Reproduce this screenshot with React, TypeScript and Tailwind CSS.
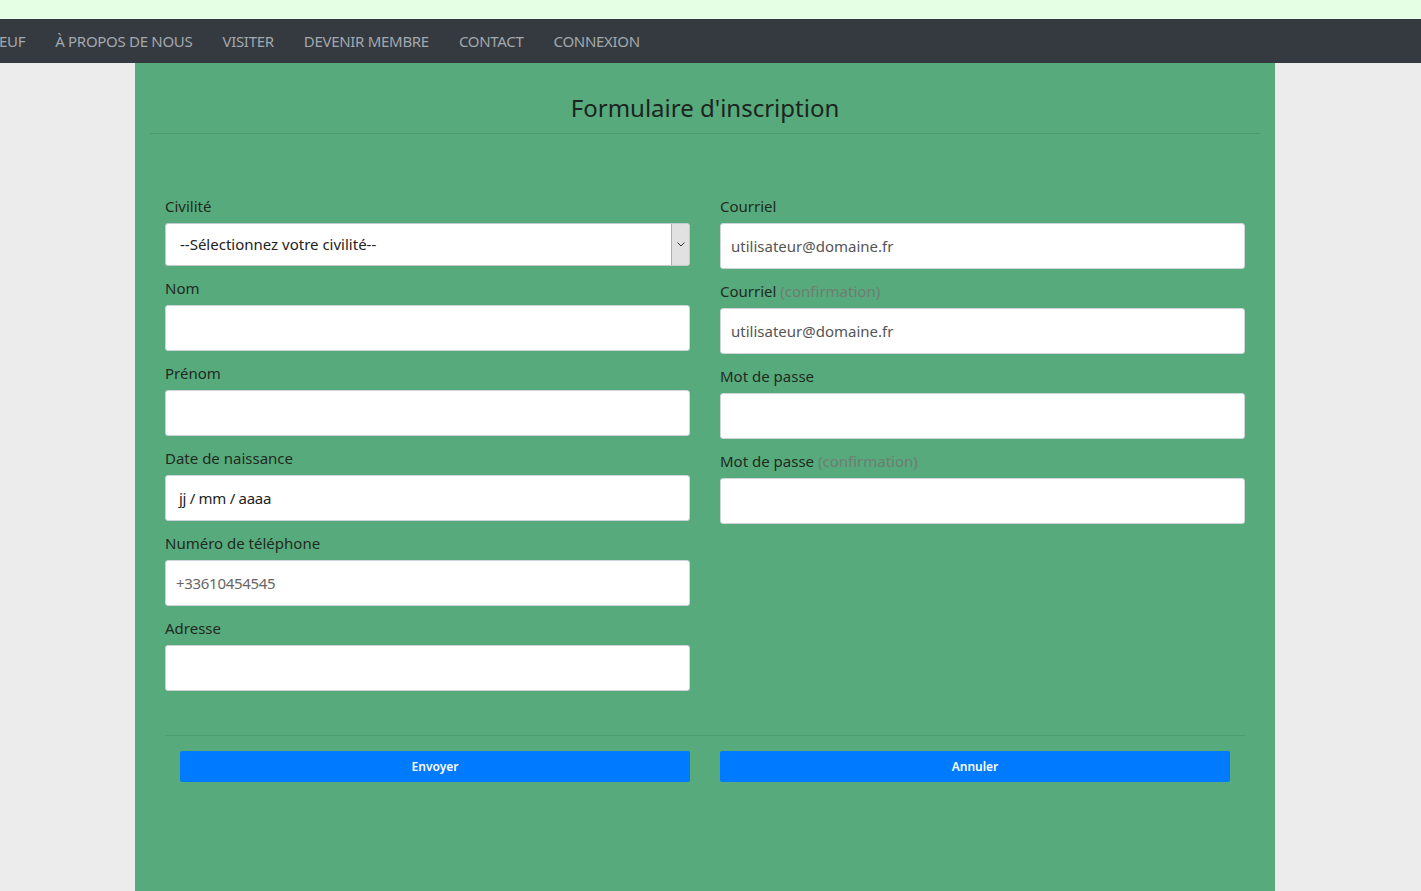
import React from "react";

const font = { fontFamily: '"Noto Sans", "Open Sans", sans-serif' };

function Label({ main, extra }: { main: string; extra?: string }) {
  return (
    <label className="block text-[15px] leading-[20px] text-[#1f2a22] mb-[7px]">
      {main}
      {extra && <span className="text-[#6f7d74]"> {extra}</span>}
    </label>
  );
}

function Input({ value, cls }: { value?: string; cls?: string }) {
  return (
    <div
      className={
        "h-[46px] w-full bg-white border border-[#ced4da] rounded-[3px] flex items-center text-[15px] " +
        (cls ?? "")
      }
    >
      {value}
    </div>
  );
}

export default function App() {
  const nav = ["À PROPOS DE NOUS", "VISITER", "DEVENIR MEMBRE", "CONTACT", "CONNEXION"];
  return (
    <div className="min-h-screen flex flex-col bg-[#ececec]" style={font}>
      <div className="h-[19px] bg-[#e5ffe5]" />
      <nav className="h-[44px] bg-[#343a40] flex items-center overflow-hidden text-[15px] text-[#a3a8ad] tracking-[-0.3px]">
        <span className="-ml-[1px] mr-[30px]">EUF</span>
        {nav.map((n) => (
          <span key={n} className="mr-[30px] whitespace-nowrap">
            {n}
          </span>
        ))}
      </nav>
      <div className="flex-1 flex pl-[135px]">
        <main className="w-[1140px] bg-[#57aa7b] px-[15px] pb-[110px]">
          <h1 className="text-center text-[24px] leading-[34px] text-[#1c241f] pt-[28px] pb-[8px]">
            Formulaire d'inscription
          </h1>
          <div className="border-t border-[#4a9a6c]" />
          <div className="px-[15px] pt-[62px]">
            <div className="grid grid-cols-2 gap-x-[30px]">
              <div className="flex flex-col gap-[12px]">
                <div>
                  <Label main="Civilité" />
                  <div className="h-[43px] bg-white border border-[#c4c9cd] rounded-[3px] flex items-center text-[15px] text-[#222] pl-[14px] relative">
                    --Sélectionnez votre civilité--
                    <div className="absolute right-0 top-0 bottom-0 w-[18px] bg-[#e1e1e1] border-l border-[#adadad] rounded-r-[3px] flex items-center justify-center">
                      <svg width="8" height="5" viewBox="0 0 8 5">
                        <path d="M0.5 0.5 L4 4 L7.5 0.5" fill="none" stroke="#333" strokeWidth="1" />
                      </svg>
                    </div>
                  </div>
                </div>
                <div>
                  <Label main="Nom" />
                  <Input />
                </div>
                <div>
                  <Label main="Prénom" />
                  <Input />
                </div>
                <div>
                  <Label main="Date de naissance" />
                  <Input value="jj / mm / aaaa" cls="pl-[13px] text-[#222] tracking-[-0.3px]" />
                </div>
                <div>
                  <Label main="Numéro de téléphone" />
                  <Input value="+33610454545" cls="pl-[10px] text-[#666] tracking-[-0.3px]" />
                </div>
                <div>
                  <Label main="Adresse" />
                  <Input />
                </div>
              </div>
              <div className="flex flex-col gap-[12px]">
                <div>
                  <Label main="Courriel" />
                  <Input value="utilisateur@domaine.fr" cls="pl-[10px] text-[#555]" />
                </div>
                <div>
                  <Label main="Courriel" extra="(confirmation)" />
                  <Input value="utilisateur@domaine.fr" cls="pl-[10px] text-[#555]" />
                </div>
                <div>
                  <Label main="Mot de passe" />
                  <Input />
                </div>
                <div>
                  <Label main="Mot de passe" extra="(confirmation)" />
                  <Input />
                </div>
              </div>
            </div>
            <div className="border-t border-[#4c9d6e] mt-[44px]" />
            <div className="grid grid-cols-2 gap-x-[30px] px-[15px] pt-[15px]">
              <button className="h-[31px] bg-[#007bff] text-white text-[12px] font-semibold rounded-[2px]">
                Envoyer
              </button>
              <button className="h-[31px] bg-[#007bff] text-white text-[12px] font-semibold rounded-[2px]">
                Annuler
              </button>
            </div>
          </div>
        </main>
      </div>
    </div>
  );
}
